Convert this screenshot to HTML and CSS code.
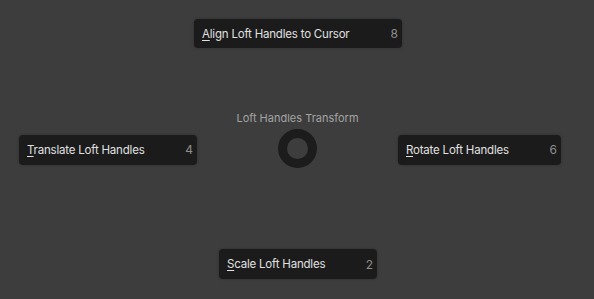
FILE: index.html
```html
<!DOCTYPE html>
<html>
<head>
<meta charset="utf-8">
<link rel="stylesheet" href="styles.css">
</head>
<body>
<div class="pie">
  <div class="item item-top"><span class="label"><u>A</u>lign Loft Handles to Cursor</span><span class="key">8</span></div>
  <div class="middle">
    <div class="title">Loft Handles Transform</div>
    <div class="item item-left"><span class="label"><u>T</u>ranslate Loft Handles</span><span class="key">4</span></div>
    <div class="ring"></div>
    <div class="item item-right"><span class="label"><u>R</u>otate Loft Handles</span><span class="key">6</span></div>
  </div>
  <div class="item item-bottom"><span class="label"><u>S</u>cale Loft Handles</span><span class="key">2</span></div>
</div>
</body>
</html>
```
FILE: styles.css
```css
html, body {
  margin: 0;
  padding: 0;
  background: #3d3d3d;
  width: 594px;
  height: 299px;
  overflow: hidden;
  font-family: Inter, "Noto Sans", "DejaVu Sans", sans-serif;
}
.pie {
  display: flex;
  flex-direction: column;
  align-items: center;
  padding-left: 2px;
  padding-top: 19px;
}
.item {
  box-sizing: border-box;
  display: flex;
  align-items: center;
  justify-content: space-between;
  background: #1b1b1b;
  border-radius: 4px;
  box-shadow: 0 0 3px rgba(0, 0, 0, 0.25);
  padding: 0 4px 0 8px;
  font-size: 11.5px;
  letter-spacing: -0.2px;
  color: #e0e0e0;
}
.label u {
  text-decoration-thickness: 1px;
  text-underline-offset: 2px;
}
.key {
  color: #8e8e8e;
  font-size: 12px;
  letter-spacing: 0;
}
.item-top {
  width: 208px;
  height: 29px;
}
.middle {
  align-self: flex-start;
  margin-left: 17px;
  margin-top: 63px;
  display: grid;
  grid-template-columns: 178px 201px 163px;
  grid-template-rows: 14px 39px;
  row-gap: 4px;
  align-items: center;
  justify-items: center;
}
.title {
  grid-column: 2;
  grid-row: 1;
  font-size: 11px;
  color: #a3a3a3;
  line-height: 14px;
}
.item-left {
  grid-column: 1;
  grid-row: 2;
  width: 178px;
  height: 30px;
  margin-top: 2px;
}
.item-right {
  grid-column: 3;
  grid-row: 2;
  width: 163px;
  height: 30px;
  margin-top: 2px;
}
.ring {
  grid-column: 2;
  grid-row: 2;
  width: 21px;
  height: 21px;
  border: 9px solid #1c1c1c;
  border-radius: 50%;
}
.item-bottom {
  margin-top: 81px;
  width: 158px;
  height: 30px;
}
```
